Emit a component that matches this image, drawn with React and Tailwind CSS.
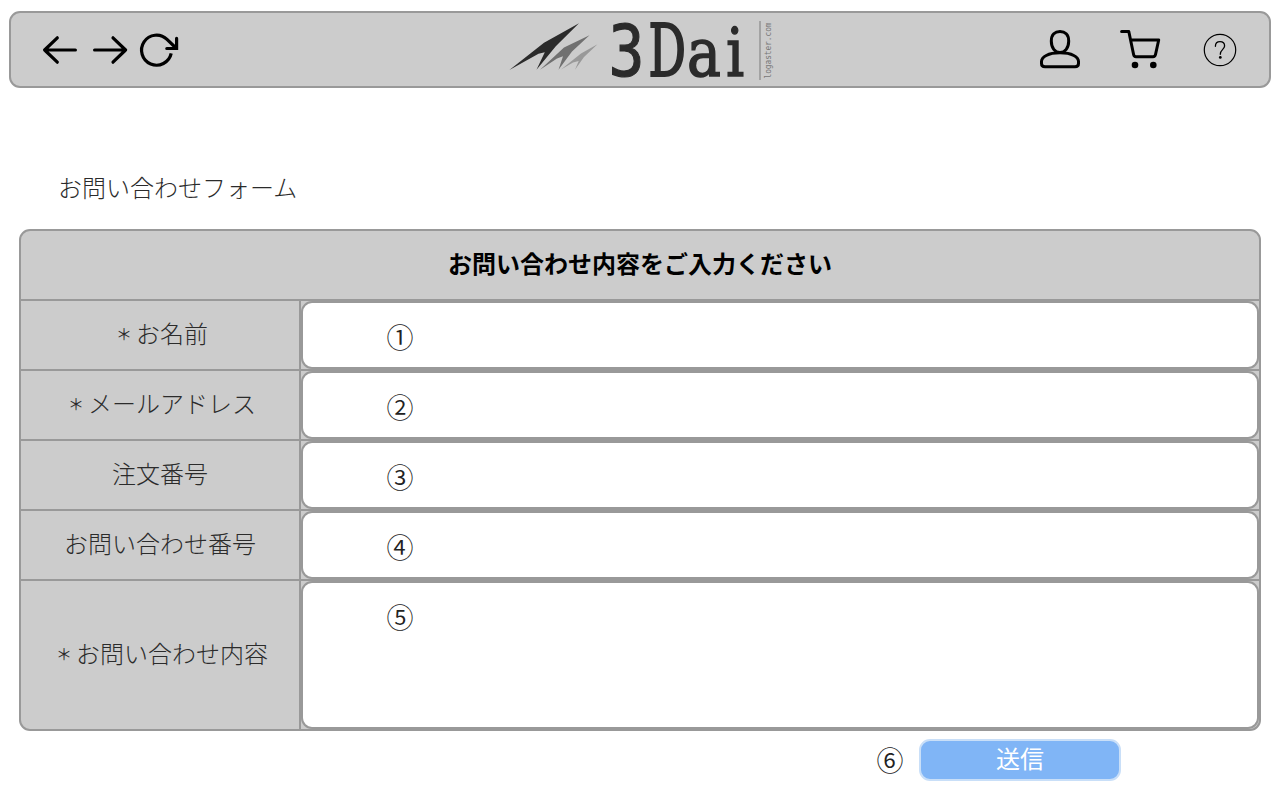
const rows = [
  { label: 'お名前', required: true, mark: '①', h: 'h-[70px]' },
  { label: 'メールアドレス', required: true, mark: '②', h: 'h-[70px]' },
  { label: '注文番号', required: false, mark: '③', h: 'h-[70px]' },
  { label: 'お問い合わせ番号', required: false, mark: '④', h: 'h-[70px]' },
  { label: 'お問い合わせ内容', required: true, mark: '⑤', h: 'h-[150px]' },
];

function NavIcons() {
  return (
    <svg width="140" height="40" viewBox="41 30 140 40" fill="none" stroke="#000" strokeWidth="3.2">
      <g strokeLinecap="round" strokeLinejoin="round">
        <path d="M75.4 50H44.6M57.3 37.8L44.6 50L57.3 62.2" />
        <path d="M94.6 50H125.6M113 37.8L125.6 50L113 62.2" />
      </g>
      <path d="M171.2 53.4A15 15 0 1 1 167 39.4L176.5 48.5" />
      <path d="M176.6 38.4V48.5H166.8" strokeLinecap="round" />
    </svg>
  );
}

function Logo() {
  return (
    <svg className="overflow-visible" width="270" height="72" viewBox="508 14 270 72">
      <path fill="#999" d="M561 69.5L581 53.5L597.5 44.3L584 57L575 69.8L578.7 61L573 62.5Z" />
      <path fill="#707070" d="M540 69.8L564 47.5L589.5 35.2L572 51.5L558.5 69.7L563 56.3L557 58.5Z" />
      <path fill="#2b2b2b" d="M509.4 69.9L544 42.8L579 23.3L556 46L536.5 69.8L544.8 52.3L538.5 53.8Z" />
      <g fill="#2b2b2b" stroke="#2b2b2b">
        <text transform="translate(608.6 76) scale(0.83 1)" fontFamily="'DejaVu Sans Mono'" fontSize="72" strokeWidth="1.2">3</text>
        <text transform="translate(648.4 76) scale(0.64 1)" fontFamily="'DejaVu Serif'" fontSize="73" strokeWidth="2.2">D</text>
        <text transform="translate(687 76) scale(0.85 1)" fontFamily="'DejaVu Serif'" fontSize="67" strokeWidth="1.6">a</text>
        <text transform="translate(726 76) scale(0.84 1)" fontFamily="'DejaVu Serif'" fontSize="68" strokeWidth="1.4">i</text>
      </g>
      <path d="M760 21V80" stroke="#999" strokeWidth="1.6" />
      <text transform="translate(771.3 78.5) rotate(-90)" textLength="56" lengthAdjust="spacingAndGlyphs" fill="#777" fontFamily="'DejaVu Sans Mono'" fontSize="9">logaster.com</text>
    </svg>
  );
}

function UserIcons() {
  return (
    <svg width="200" height="42" viewBox="1038 29 200 42" fill="none" stroke="#000" strokeWidth="3" strokeLinecap="round" strokeLinejoin="round">
      <path d="M1051.3 41C1051.3 34.5 1055 31.5 1060 31.5S1068.7 34.5 1068.7 41C1068.7 48 1065 52.5 1060 52.5S1051.3 48 1051.3 41Z" />
      <path d="M1060 52.8C1048 52.8 1041.5 57 1041.5 61.5V63.5Q1041.5 66.7 1045 66.7H1075Q1078.5 66.7 1078.5 63.5V61.5C1078.5 57 1072 52.8 1060 52.8Z" />
      <path d="M1121.6 31.5H1128.8L1133.6 54.5Q1134 56.7 1136 56.7H1153Q1155 56.7 1155.5 54.5L1158.7 40H1131" />
      <circle cx="1135" cy="65" r="3.3" fill="#000" stroke="none" />
      <circle cx="1153.3" cy="65" r="3.3" fill="#000" stroke="none" />
      <circle cx="1220" cy="50" r="15.7" strokeWidth="1.2" />
      <path d="M1215.4 46.3C1215.4 43.4 1217.3 41.7 1220 41.7S1224.6 43.4 1224.6 46C1224.6 49.4 1220.3 49.5 1220.3 54.3" strokeWidth="1.3" />
      <circle cx="1220.3" cy="57.4" r="1.4" fill="#000" stroke="none" />
    </svg>
  );
}

function Mark({ children }) {
  return <span className="block w-7 text-center text-[27px] leading-8 font-[350] text-[#222]">{children}</span>;
}

export default function App() {
  return (
    <div className="flex h-[800px] w-[1280px] flex-col overflow-hidden bg-white font-['Noto_Sans_CJK_JP',sans-serif] text-2xl font-light text-[#2b2b2b]">
      <header className="mx-[9px] mt-[11px] flex h-[77px] shrink-0 items-center justify-between rounded-[11px] border-2 border-[#999] bg-[#ccc] pr-[31px] pl-[30px]">
        <NavIcons />
        <div className="ml-[66px]"><Logo /></div>
        <UserIcons />
      </header>
      <h1 className="mt-[81px] ml-[58px] h-9 leading-9 font-light">お問い合わせフォーム</h1>
      <form className="mx-[19px] mt-[24px] w-[1242px] shrink-0 overflow-hidden rounded-[11px] border-2 border-[#999] bg-[#ccc]">
        <h2 className="flex h-[68px] items-center justify-center pb-1 font-bold text-black">お問い合わせ内容をご入力ください</h2>
        {rows.map((row) => (
          <div key={row.label} className={'flex border-t-2 border-[#999] ' + row.h}>
            <label className="flex w-[280px] items-center justify-center border-r-2 border-[#999] pb-1">
              {row.required && <span className="w-6 text-center text-base font-normal">＊</span>}
              {row.label}
            </label>
            <div className="flex-1 rounded-[11px] border-2 border-[#999] bg-white pt-[18px] pl-[83px]">
              <Mark>{row.mark}</Mark>
            </div>
          </div>
        ))}
      </form>
      <div className="mt-2 flex items-center pl-[876px]">
        <Mark>⑥</Mark>
        <button className="ml-[15px] flex h-[42px] w-[202px] items-center justify-center rounded-[11px] border-2 border-[#c9dff8] bg-[#80b5f6] pb-1 font-normal text-white">送信</button>
      </div>
    </div>
  );
}
